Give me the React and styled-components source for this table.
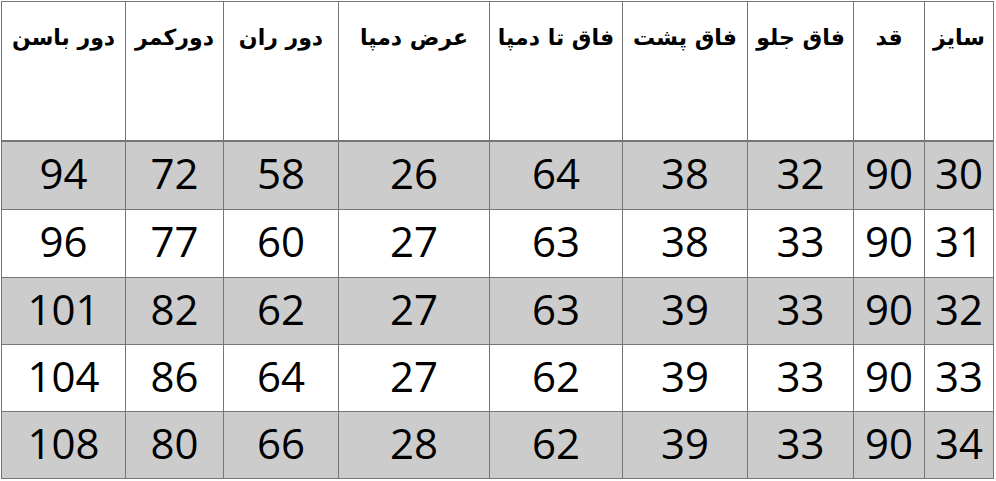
import React from "react";
import styled, { createGlobalStyle } from "styled-components";

const Global = createGlobalStyle`
  html, body { margin: 0; padding: 0; background: #ffffff; }
  body { width: 996px; height: 481px; overflow: hidden; }
`;

const headers = ["سایز", "قد", "فاق جلو", "فاق پشت", "فاق تا دمپا", "عرض دمپا", "دور ران", "دورکمر", "دور باسن"];
const rows = [
  [30, 90, 32, 38, 64, 26, 58, 72, 94],
  [31, 90, 33, 38, 63, 27, 60, 77, 96],
  [32, 90, 33, 39, 63, 27, 62, 82, 101],
  [33, 90, 33, 39, 62, 27, 64, 86, 104],
  [34, 90, 33, 39, 62, 28, 66, 80, 108],
];

const Table = styled.div`
  direction: rtl;
  display: grid;
  grid-template-columns: 68px 70px 105px 124px 132px 150px 114px 97px 123px;
  grid-template-rows: 139px 67px 67px 66px 66px 66px;
  gap: 1px;
  padding: 1px;
  margin: 1px 0 0 1px;
  width: max-content;
  background: #767676;
`;

const HeaderCell = styled.div`
  background: #ffffff;
  border-bottom: 1px solid #767676;
  display: flex;
  justify-content: center;
  align-items: flex-start;
  padding-top: 23px;
  font-family: "DejaVu Sans", "Noto Sans", sans-serif;
  font-weight: bold;
  font-size: 22px;
  color: #000;
  white-space: nowrap;
`;

const Cell = styled.div`
  background: ${(p) => (p.$shaded ? "#cccccc" : "#ffffff")};
  display: flex;
  justify-content: center;
  align-items: center;
  padding-bottom: 6px;
  font-family: "Open Sans", "Lato", sans-serif;
  font-size: 42px;
  color: #000;
  direction: ltr;
`;

export default function App() {
  return (
    <>
      <Global />
      <Table>
        {headers.map((h) => (
          <HeaderCell key={h}>{h}</HeaderCell>
        ))}
        {rows.map((r, i) =>
          r.map((v, j) => (
            <Cell key={`${i}-${j}`} $shaded={i % 2 === 0}>
              {v}
            </Cell>
          ))
        )}
      </Table>
    </>
  );
}
